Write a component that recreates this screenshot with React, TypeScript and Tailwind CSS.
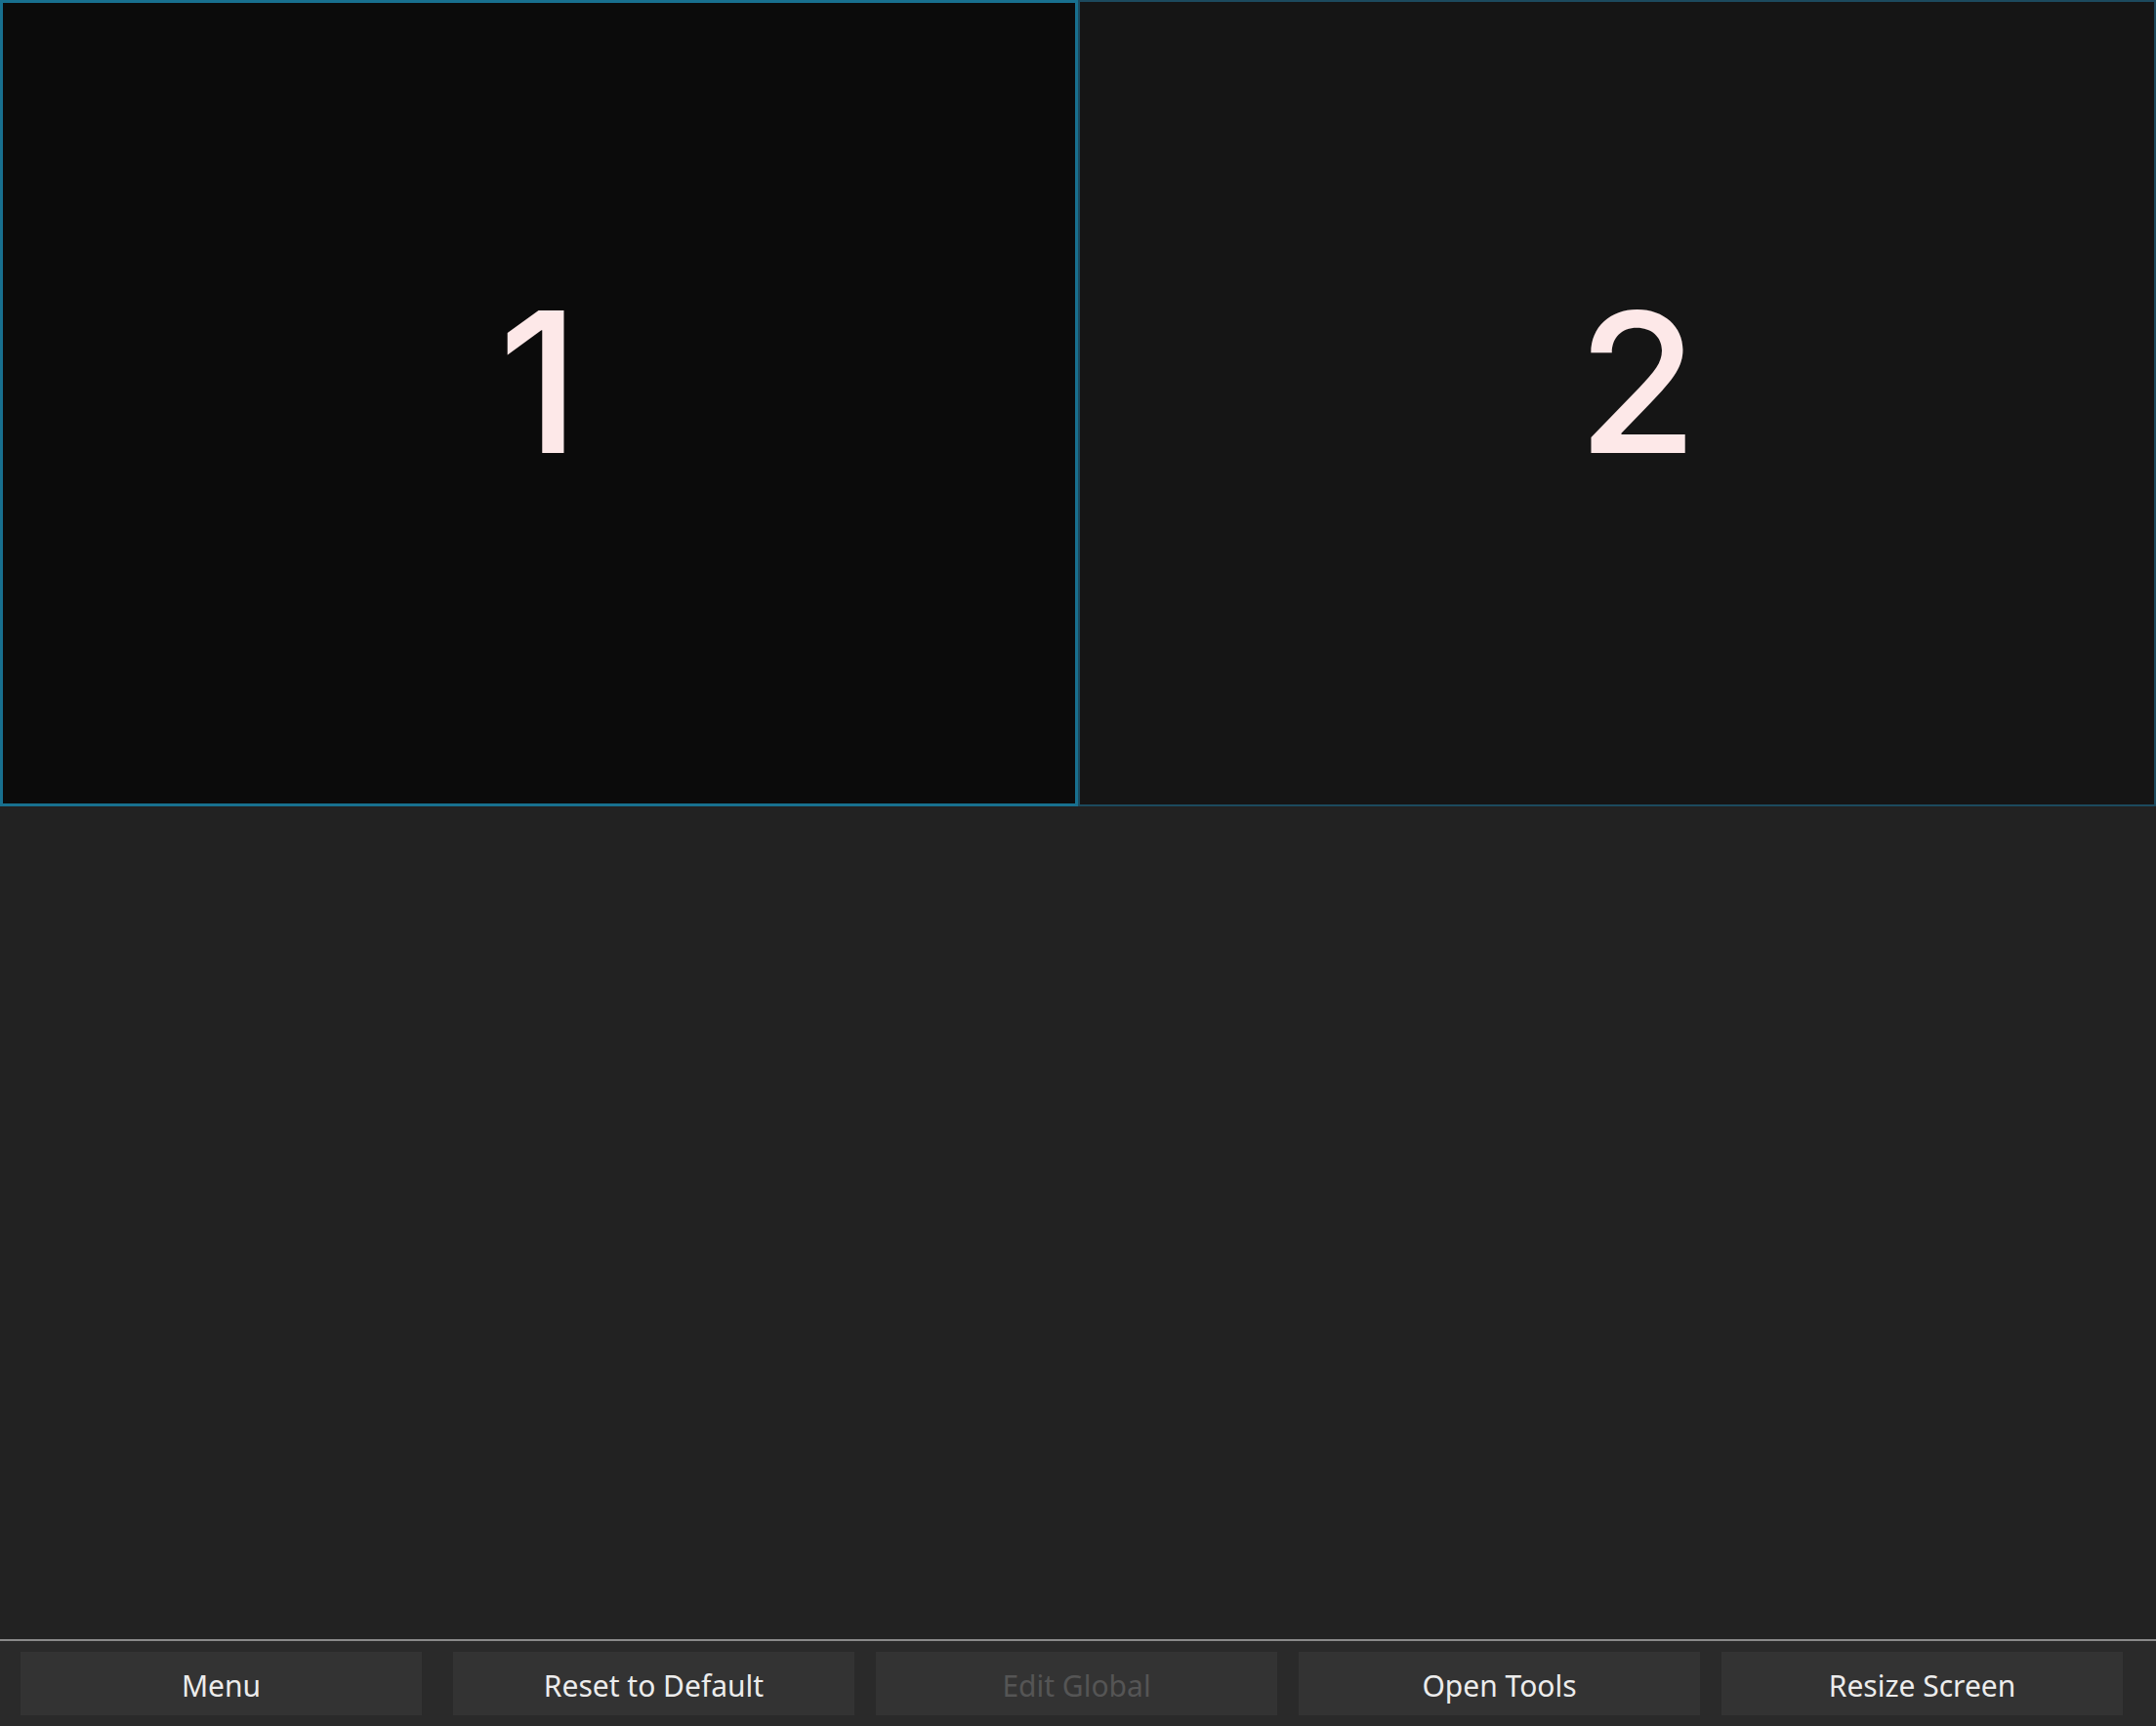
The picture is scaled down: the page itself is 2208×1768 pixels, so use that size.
import React from "react";

const buttons: { label: string; disabled?: boolean; ml: string }[] = [
  { label: "Menu", ml: "ml-[21px]" },
  { label: "Reset to Default", ml: "ml-[32px]" },
  { label: "Edit Global", disabled: true, ml: "ml-[22px]" },
  { label: "Open Tools", ml: "ml-[22px]" },
  { label: "Resize Screen", ml: "ml-[22px]" },
];

export default function App() {
  return (
    <div className="w-[2208px] h-[1768px] bg-[#222222] flex flex-col overflow-hidden">
      <div className="flex h-[826px] shrink-0">
        <div className="w-[1104px] h-full bg-[#0b0b0b] border-[3px] border-[#18708f] flex items-center justify-center pb-[44px]">
          <span className="text-[200px] leading-[1.21] font-medium text-[#fde8e8] [font-family:Inter,'Noto_Sans',sans-serif]">1</span>
        </div>
        <div className="w-[1104px] h-full bg-[#151515] border-2 border-[#1c4a5e] flex items-center justify-center pb-[44px]">
          <span className="text-[200px] leading-[1.21] font-medium text-[#fde8e8] [font-family:Inter,'Noto_Sans',sans-serif] pl-[42px]">2</span>
        </div>
      </div>
      <div className="flex-1" />
      <div className="h-[2px] bg-[#8a8a8a] shrink-0" />
      <div className="h-[87px] bg-[#2a2a2a] flex items-start pt-[11px] shrink-0">
        {buttons.map((b) => (
          <div
            key={b.label}
            className={`${b.ml} w-[411px] h-[65px] bg-[#333333] flex items-center justify-center pt-[3px] text-[30px] [font-family:'Noto_Sans',sans-serif] ${
              b.disabled ? "text-[#555555]" : "text-[#ececec]"
            }`}
          >
            {b.label}
          </div>
        ))}
      </div>
    </div>
  );
}
